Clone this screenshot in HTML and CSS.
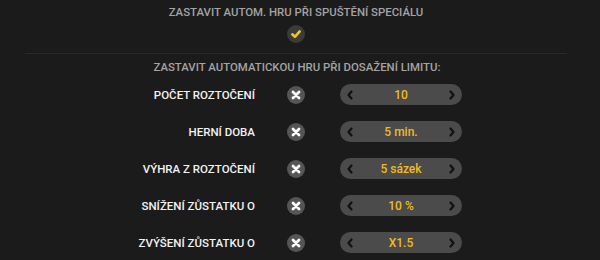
FILE: index.html
```html
<!DOCTYPE html>
<html>
<head>
<meta charset="utf-8">
<link rel="stylesheet" href="styles.css">
</head>
<body>
<div class="panel">
  <div class="title">ZASTAVIT AUTOM. HRU PŘI SPUŠTĚNÍ SPECIÁLU</div>
  <div class="check-wrap">
    <span class="check">
      <svg width="18" height="18" viewBox="0 0 18 18"><path d="M5.3 9.3 L7.9 11.8 L12.7 6.4" fill="none" stroke="#f2c318" stroke-width="2.6" stroke-linecap="round" stroke-linejoin="round"/></svg>
    </span>
  </div>
  <div class="divider"></div>
  <div class="heading">ZASTAVIT AUTOMATICKOU HRU PŘI DOSAŽENÍ LIMITU:</div>
  <div class="rows">
    <div class="row">
      <div class="label">POČET ROZTOČENÍ</div>
      <span class="xbtn"><svg width="18" height="18" viewBox="0 0 18 18"><path d="M6 6 L12 12 M12 6 L6 12" stroke="#fff" stroke-width="2.8" stroke-linecap="round"/></svg></span>
      <div class="pill"><svg class="arr" width="8" height="10" viewBox="0 0 8 10"><path d="M5.5 1.5 L2.5 5 L5.5 8.5" fill="none" stroke="#111" stroke-width="2.2" stroke-linecap="round" stroke-linejoin="round"/></svg><span class="val">10</span><svg class="arr" width="8" height="10" viewBox="0 0 8 10"><path d="M2.5 1.5 L5.5 5 L2.5 8.5" fill="none" stroke="#111" stroke-width="2.2" stroke-linecap="round" stroke-linejoin="round"/></svg></div>
    </div>
    <div class="row">
      <div class="label">HERNÍ DOBA</div>
      <span class="xbtn"><svg width="18" height="18" viewBox="0 0 18 18"><path d="M6 6 L12 12 M12 6 L6 12" stroke="#fff" stroke-width="2.8" stroke-linecap="round"/></svg></span>
      <div class="pill"><svg class="arr" width="8" height="10" viewBox="0 0 8 10"><path d="M5.5 1.5 L2.5 5 L5.5 8.5" fill="none" stroke="#111" stroke-width="2.2" stroke-linecap="round" stroke-linejoin="round"/></svg><span class="val">5 min.</span><svg class="arr" width="8" height="10" viewBox="0 0 8 10"><path d="M2.5 1.5 L5.5 5 L2.5 8.5" fill="none" stroke="#111" stroke-width="2.2" stroke-linecap="round" stroke-linejoin="round"/></svg></div>
    </div>
    <div class="row">
      <div class="label">VÝHRA Z ROZTOČENÍ</div>
      <span class="xbtn"><svg width="18" height="18" viewBox="0 0 18 18"><path d="M6 6 L12 12 M12 6 L6 12" stroke="#fff" stroke-width="2.8" stroke-linecap="round"/></svg></span>
      <div class="pill"><svg class="arr" width="8" height="10" viewBox="0 0 8 10"><path d="M5.5 1.5 L2.5 5 L5.5 8.5" fill="none" stroke="#111" stroke-width="2.2" stroke-linecap="round" stroke-linejoin="round"/></svg><span class="val">5 sázek</span><svg class="arr" width="8" height="10" viewBox="0 0 8 10"><path d="M2.5 1.5 L5.5 5 L2.5 8.5" fill="none" stroke="#111" stroke-width="2.2" stroke-linecap="round" stroke-linejoin="round"/></svg></div>
    </div>
    <div class="row">
      <div class="label">SNÍŽENÍ ZŮSTATKU O</div>
      <span class="xbtn"><svg width="18" height="18" viewBox="0 0 18 18"><path d="M6 6 L12 12 M12 6 L6 12" stroke="#fff" stroke-width="2.8" stroke-linecap="round"/></svg></span>
      <div class="pill"><svg class="arr" width="8" height="10" viewBox="0 0 8 10"><path d="M5.5 1.5 L2.5 5 L5.5 8.5" fill="none" stroke="#111" stroke-width="2.2" stroke-linecap="round" stroke-linejoin="round"/></svg><span class="val">10 %</span><svg class="arr" width="8" height="10" viewBox="0 0 8 10"><path d="M2.5 1.5 L5.5 5 L2.5 8.5" fill="none" stroke="#111" stroke-width="2.2" stroke-linecap="round" stroke-linejoin="round"/></svg></div>
    </div>
    <div class="row">
      <div class="label">ZVÝŠENÍ ZŮSTATKU O</div>
      <span class="xbtn"><svg width="18" height="18" viewBox="0 0 18 18"><path d="M6 6 L12 12 M12 6 L6 12" stroke="#fff" stroke-width="2.8" stroke-linecap="round"/></svg></span>
      <div class="pill"><svg class="arr" width="8" height="10" viewBox="0 0 8 10"><path d="M5.5 1.5 L2.5 5 L5.5 8.5" fill="none" stroke="#111" stroke-width="2.2" stroke-linecap="round" stroke-linejoin="round"/></svg><span class="val">X1.5</span><svg class="arr" width="8" height="10" viewBox="0 0 8 10"><path d="M2.5 1.5 L5.5 5 L2.5 8.5" fill="none" stroke="#111" stroke-width="2.2" stroke-linecap="round" stroke-linejoin="round"/></svg></div>
    </div>
  </div>
</div>
</body>
</html>
```
FILE: styles.css
```css
html, body {
  margin: 0;
  padding: 0;
  background: #1b1b1b;
  width: 600px;
  height: 260px;
  overflow: hidden;
}
.panel {
  font-family: "Roboto", "Liberation Sans", sans-serif;
  padding-top: 5px;
}
.title {
  text-align: center;
  color: #a4a4a4;
  font-size: 11.4px;
  font-weight: 500;
  line-height: 14px;
  margin-left: -8px;
}
.check-wrap {
  display: flex;
  justify-content: center;
  margin-top: 6px;
  padding-right: 8px;
}
.check {
  width: 18px;
  height: 18px;
  border-radius: 50%;
  background: #3b3b3b;
  display: flex;
}
.divider {
  margin: 10px 33px 0 25px;
  height: 1px;
  background: #2a2a2a;
}
.heading {
  margin-top: 6px;
  text-align: center;
  color: #a4a4a4;
  font-size: 11.4px;
  font-weight: 500;
  line-height: 14px;
  margin-left: -6px;
}
.rows {
  margin-top: 10px;
  display: flex;
  flex-direction: column;
  gap: 16px;
}
.row {
  display: flex;
  align-items: center;
  height: 21px;
}
.label {
  width: 255px;
  text-align: right;
  color: #f2f2f2;
  font-size: 11.5px;
  font-weight: 500;
}
.xbtn {
  margin-left: 32px;
  width: 18px;
  height: 18px;
  border-radius: 50%;
  background: #555555;
  display: flex;
}
.pill {
  margin-left: 35px;
  width: 122px;
  height: 21px;
  border-radius: 11px;
  background: #4b4b4b;
  display: flex;
  align-items: center;
  justify-content: space-between;
  padding: 0 6px;
  box-sizing: border-box;
}
.val {
  color: #efbd1d;
  font-size: 12px;
  font-weight: 500;
}
.arr {
  display: block;
}
```
